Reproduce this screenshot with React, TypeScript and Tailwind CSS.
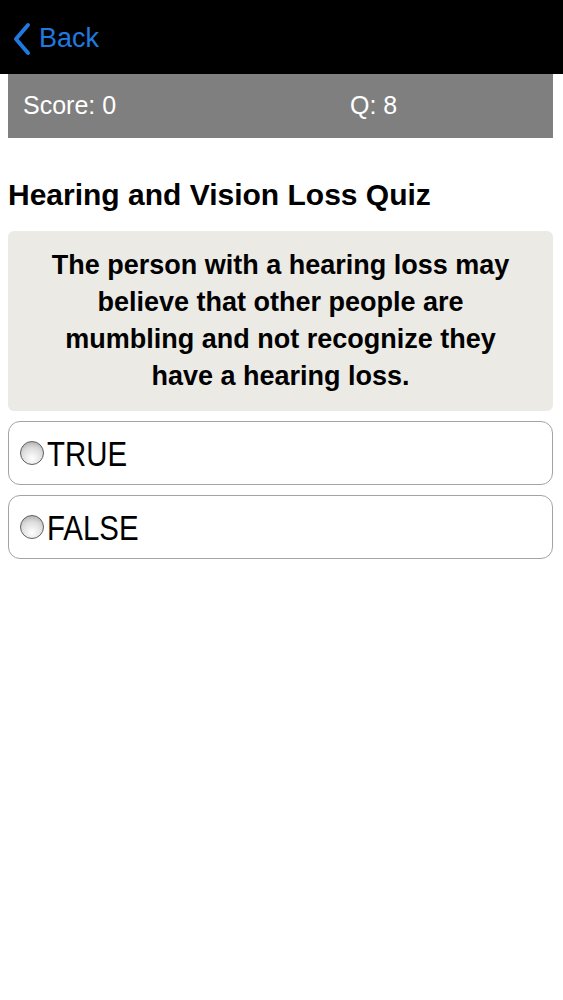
export default function App() {
  return (
    <div className="min-h-screen w-[563px] bg-white font-['Liberation_Sans',Arial,sans-serif]">
      {/* nav bar */}
      <div className="flex h-[74px] items-center bg-black pl-[12px]">
        <svg width="20" height="34" viewBox="0 0 20 34" className="mt-[4px]">
          <path d="M16 3 L4 17 L16 31" fill="none" stroke="#1f7ae0" strokeWidth="4" strokeLinecap="round" strokeLinejoin="round" />
        </svg>
        <span className="ml-[7px] mt-[3px] text-[27px] text-[#1f7ae0]">Back</span>
      </div>

      <div className="pl-[8px] pr-[10px]">
        {/* score bar */}
        <div className="flex h-[64px] items-center bg-[#807f80] text-[25px] text-white">
          <span className="ml-[15px] w-[327px]">Score: 0</span>
          <span>Q: 8</span>
        </div>

        <h1 className="mt-[40px] text-[30px] font-bold leading-[34px] text-black">Hearing and Vision Loss Quiz</h1>

        <div className="mt-[19px] flex h-[180px] items-center justify-center rounded-[6px] bg-[#ebeae5] px-[38px]">
          <p className="text-center text-[27px] font-bold leading-[37px] text-black">
            The person with a hearing loss may believe that other people are mumbling and not recognize they have a
            hearing loss.
          </p>
        </div>

        <div className="mt-[10px] flex flex-col gap-[10px]">
          {['TRUE', 'FALSE'].map((label) => (
            <div
              key={label}
              className="flex h-[64px] items-center rounded-[12px] border border-[#a3a3a3] bg-white pl-[11px]"
            >
              <span className="h-[24px] w-[24px] shrink-0 rounded-full border border-[#5f5f5f] bg-[radial-gradient(circle_at_50%_75%,#ffffff_0%,#dcdcdc_55%,#a0a0a0_100%)]" />
              <span className="ml-[3px] origin-left scale-x-[0.84] text-[35px] leading-none text-black">{label}</span>
            </div>
          ))}
        </div>
      </div>
    </div>
  );
}
